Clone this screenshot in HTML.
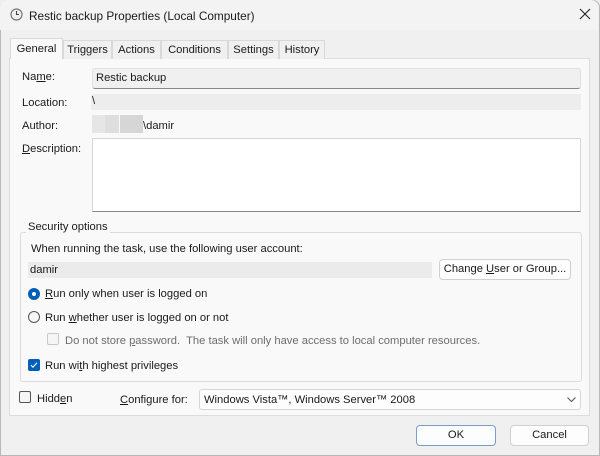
<!DOCTYPE html><html><head><style>
*{box-sizing:border-box;margin:0;padding:0}
body{width:600px;height:456px;overflow:hidden;background:#f0f0f0;font-family:"Liberation Sans",sans-serif;font-size:11.2px;color:#1a1a1a;position:relative}
.a{position:absolute;white-space:nowrap}
.win{position:absolute;left:0;top:0;width:600px;height:456px;border:1px solid #b8b8b8;border-radius:7px 7px 0 0;background:#f0f0f0}
.title{position:absolute;left:0;top:0;width:598px;height:30px;background:#f3f3f3;border-radius:7px 7px 0 0}
.tab{position:absolute;top:40px;height:19px;border:1px solid #d9d9d9;border-bottom:none;background:#f0f0f0;text-align:center;line-height:19px}
.panel{position:absolute;left:9px;top:58px;width:581px;height:358px;background:#f9f9f9;border:1px solid #dcdcdc}
.btn{position:absolute;background:#fdfdfd;border:1px solid #d0d0d0;border-radius:4px;text-align:center}
u{text-decoration:underline}
</style></head><body>
<div class="win"></div>
<div class="title"></div>
<svg class="a" style="left:10px;top:8px" width="13" height="13" viewBox="0 0 13 13"><circle cx="6.5" cy="6.5" r="5.5" fill="#f0f0f0" stroke="#777" stroke-width="1.2"/><path d="M6.5 3v3.5h2.5" stroke="#444" fill="none" stroke-width="1.1"/></svg>
<div class="a" style="left:29px;top:9px;font-size:11.8px">Restic backup Properties (Local Computer)</div>
<svg class="a" style="left:579px;top:8px" width="12" height="12"><path d="M1 1L11 11M11 1L1 11" stroke="#222" stroke-width="1.1"/></svg>
<div class="panel"></div>
<div class="tab" style="left:10px;top:38px;width:53px;height:21px;background:#f9f9f9;z-index:2;line-height:20px">General</div>
<div class="tab" style="left:63px;width:49px">Triggers</div>
<div class="tab" style="left:112px;width:49px">Actions</div>
<div class="tab" style="left:161px;width:67px">Conditions</div>
<div class="tab" style="left:228px;width:51px">Settings</div>
<div class="tab" style="left:279px;width:46px">History</div>

<div class="a" style="left:22px;top:71px">Na<u>m</u>e:</div>
<div class="a" style="left:92px;top:68px;width:489px;height:21px;background:#f0f0f0;border:1px solid #e0e0e0;border-bottom:1px solid #888;border-radius:3px;padding:3px 0 0 3px">Restic backup</div>
<div class="a" style="left:22px;top:97px">Location:</div>
<div class="a" style="left:91px;top:94px;width:490px;height:16px;background:#ededed;padding:1px 0 0 1px">\</div>
<div class="a" style="left:22px;top:120px">Author:</div>
<div class="a" style="left:92px;top:115px;width:13px;height:18px;background:#e6e6e6"></div>
<div class="a" style="left:105px;top:115px;width:14px;height:18px;background:#dedede"></div>
<div class="a" style="left:120px;top:115px;width:23px;height:18px;background:#d6d6d6"></div>
<div class="a" style="left:143px;top:120px">\damir</div>
<div class="a" style="left:22px;top:143px"><u>D</u>escription:</div>
<div class="a" style="left:92px;top:138px;width:489px;height:74px;background:#fff;border:1px solid #d6d6d6;border-bottom:1px solid #888"></div>

<div class="a" style="left:20px;top:232px;width:562px;height:150px;border:1px solid #dcdcdc;border-radius:3px"></div>
<div class="a" style="left:26px;top:221px;background:#f9f9f9;padding:0 2px">Security options</div>
<div class="a" style="left:31px;top:243px">When running the task, use the following user account:</div>
<div class="a" style="left:28px;top:262px;width:404px;height:16px;background:#ebebeb;padding:2px 0 0 2px">damir</div>
<div class="btn" style="left:439px;top:259px;width:132px;height:21px;line-height:19px">Change <u>U</u>ser or Group...</div>
<div class="a" style="left:28px;top:288px;width:12px;height:12px;border-radius:50%;background:#005fb8"><div style="position:absolute;left:4px;top:4px;width:4px;height:4px;border-radius:50%;background:#fff"></div></div>
<div class="a" style="left:45px;top:288px"><u>R</u>un only when user is logged on</div>
<div class="a" style="left:28px;top:311px;width:12px;height:12px;border-radius:50%;border:1px solid #555;background:#f6f6f6"></div>
<div class="a" style="left:45px;top:312px">Run <u>w</u>hether user is logged on or not</div>
<div class="a" style="left:47px;top:333px;width:12px;height:12px;border-radius:2px;border:1px solid #c8c8c8;background:#f6f6f6"></div>
<div class="a" style="left:65px;top:335px;color:#6d6d6d">Do not store <u>p</u>assword.&nbsp; The task will only have access to local computer resources.</div>
<div class="a" style="left:28px;top:359px;width:12px;height:12px;border-radius:2px;background:#005fb8"><svg width="12" height="12" style="position:absolute;left:0;top:0"><path d="M3 6.2l2 2 4-4.5" stroke="#fff" fill="none" stroke-width="1.1"/></svg></div>
<div class="a" style="left:45px;top:360px">Run wi<u>t</u>h highest privileges</div>

<div class="a" style="left:19px;top:391px;width:12px;height:12px;border-radius:2px;border:1px solid #555;background:#f6f6f6"></div>
<div class="a" style="left:37px;top:393px">Hidd<u>e</u>n</div>
<div class="a" style="left:120px;top:394px"><u>C</u>onfigure for:</div>
<div class="a" style="left:199px;top:389px;width:382px;height:21px;background:#fdfdfd;border:1px solid #d6d6d6;border-radius:3px;padding:4px 0 0 4px">Windows Vista™, Windows Server™ 2008</div>
<svg class="a" style="left:567px;top:397px" width="9" height="6"><path d="M0.5 0.5L4.5 4.5 8.5 0.5" stroke="#555" fill="none"/></svg>

<div class="btn" style="left:416px;top:425px;width:80px;height:21px;line-height:19px;border:1px solid #7a9ccc">OK</div>
<div class="btn" style="left:510px;top:425px;width:79px;height:21px;line-height:19px">Cancel</div>
</body></html>
